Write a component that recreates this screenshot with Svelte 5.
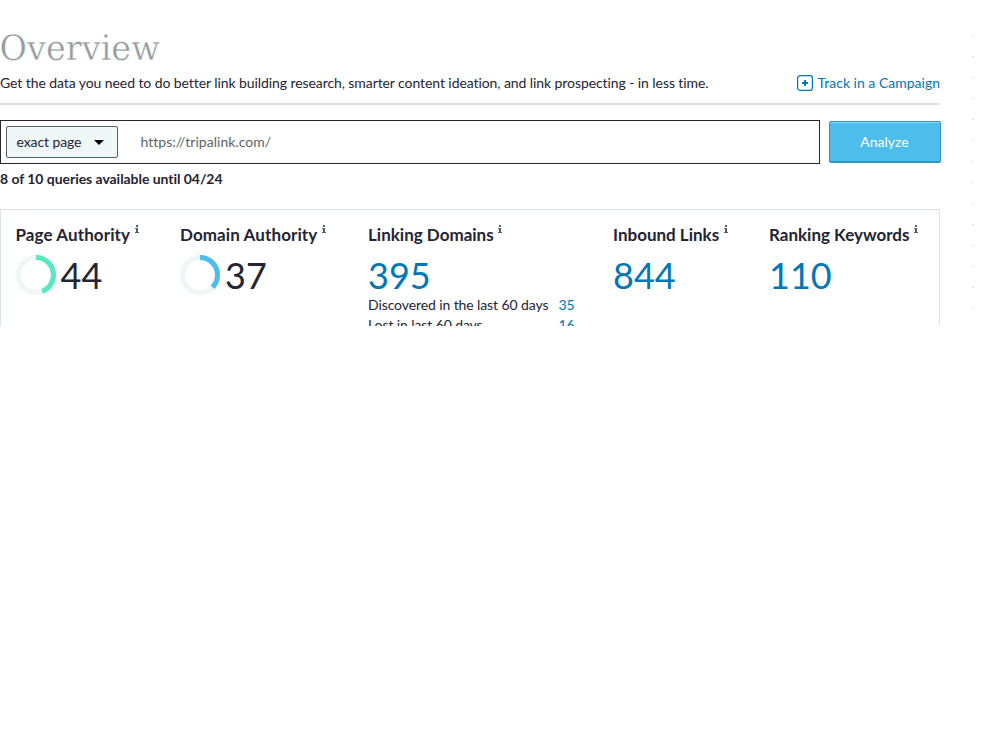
<script>
  let scope = "exact page";
  let query = "https://tripalink.com/";

  const metrics = [
    { label: "Page Authority", value: 44, color: "#5be7c4", width: 164.5 },
    { label: "Domain Authority", value: 37, color: "#4dbdeb", width: 188 },
    {
      label: "Linking Domains",
      value: 395,
      width: 245,
      details: [
        { text: "Discovered in the last 60 days", count: 35 },
        { text: "Lost in last 60 days", count: 16 },
      ],
    },
    { label: "Inbound Links", value: 844, width: 156 },
    { label: "Ranking Keywords", value: 110, width: 168 },
  ];

  const ticks = Array.from({ length: 14 });
  const circumference = 2 * Math.PI * 17.5;
</script>

<div class="page">
  <main>
    <h1>Overview</h1>
    <div class="intro">
      <p>
        Get the data you need to do better link building research, smarter
        content ideation, and link prospecting - in less time.
      </p>
      <a class="track" href="#track">
        <svg width="16" height="16" viewBox="0 0 16 16">
          <rect x=".6" y=".6" width="14.8" height="14.8" rx="2.5" fill="none" stroke="#0077b6" stroke-width="1.2" />
          <path d="M5 8h6M8 5v6" stroke="#0077b6" stroke-width="2" />
        </svg>
        <span>Track in a Campaign</span>
      </a>
    </div>

    <div class="search">
      <div class="field">
        <button class="scope">
          <span>{scope}</span>
          <svg width="10" height="5" viewBox="0 0 10 5"><path d="M0 0h10L5 5z" /></svg>
        </button>
        <span class="query">{query}</span>
      </div>
      <button class="analyze">Analyze</button>
    </div>
    <p class="quota">8 of 10 queries available until 04/24</p>

    <section class="metrics">
      {#each metrics as metric}
        <div class="metric" style="width: {metric.width}px">
          <h2 class:spaced={metric.color}>
            <span>{metric.label}</span>
            <svg class="info" width="4" height="8" viewBox="0 0 4 8">
              <path d="M1 0h2v2H1zM0 3h3v4h1v1H0V7h1V4H0z" />
            </svg>
          </h2>
          <div class="score">
            {#if metric.color}
              <svg class="ring" width="40" height="40" viewBox="0 0 40 40">
                <circle cx="20" cy="20" r="17.5" stroke="#eff7f6" />
                <circle
                  cx="20"
                  cy="20"
                  r="17.5"
                  stroke={metric.color}
                  stroke-dasharray="{(circumference * metric.value) / 100} {circumference}"
                  transform="rotate(-90 20 20)"
                />
              </svg>
              <span class="value">{metric.value}</span>
            {:else}
              <a class="value" href="#details">{metric.value}</a>
            {/if}
          </div>
          {#if metric.details}
            <div class="details">
              {#each metric.details as detail}
                <span>{detail.text}</span>
                <a href="#details">{detail.count}</a>
              {/each}
            </div>
          {/if}
        </div>
      {/each}
    </section>
  </main>

  <aside>
    {#each ticks as _}
      <i></i>
    {/each}
  </aside>
</div>

<style>
  :global(body) {
    background: #fff;
  }

  .page {
    display: flex;
    width: 1000px;
    height: 326px;
    overflow: hidden;
    font-family: Lato, sans-serif;
    font-size: 14px;
    line-height: 20px;
    font-variant-ligatures: none;
    color: #242433;
  }

  main {
    flex: none;
    width: 941px;
  }

  h1,
  h2,
  p {
    margin: 0;
  }

  h1 {
    height: 73px;
    padding-top: 24px;
    box-sizing: border-box;
    font-family: "Roboto Slab", "DejaVu Serif", serif;
    font-size: 36px;
    font-weight: 300;
    line-height: 48px;
    color: #949d9d;
    -webkit-text-stroke: 0.4px #fff;
    transform: scaleX(0.93);
    transform-origin: 8px 0;
    margin-left: -1px;
  }

  a {
    color: #0077b6;
    text-decoration: none;
  }

  .intro {
    display: flex;
    justify-content: space-between;
    width: 940px;
    height: 32px;
    box-sizing: border-box;
    border-bottom: 2px solid #dce5e5;
    white-space: nowrap;
  }

  .intro p {
    letter-spacing: -0.08px;
  }

  .track {
    display: flex;
    gap: 5px;
  }

  .track svg {
    margin-top: 2px;
  }

  .search {
    display: flex;
    gap: 9px;
    height: 44px;
    margin-top: 15px;
  }

  .field {
    display: flex;
    align-items: center;
    width: 820px;
    box-sizing: border-box;
    padding-left: 5px;
    border: 1px solid #242433;
  }

  button {
    font: inherit;
    color: inherit;
    border-radius: 2px;
  }

  .scope {
    display: flex;
    align-items: center;
    justify-content: space-between;
    width: 112px;
    height: 32px;
    padding: 0 13px 0 9.5px;
    border: 1px solid #566060;
    background: #eff7f8;
    letter-spacing: -0.1px;
  }

  .query {
    margin-left: 22.5px;
    color: #5c6666;
    letter-spacing: 0.03px;
  }

  .analyze {
    width: 112px;
    height: 42px;
    margin-top: 1px;
    padding: 0 1px 0 0;
    border: 1px solid #3097c4;
    border-bottom-width: 2px;
    background: #4dbdeb;
    box-shadow: inset 0 1px #8bd5f4;
    color: #fff;
  }

  .quota {
    margin-top: 5px;
    font-weight: 700;
    letter-spacing: -0.05px;
  }

  .metrics {
    display: flex;
    width: 940px;
    height: 200px;
    margin-top: 20px;
    padding: 15px 0 0 14.5px;
    box-sizing: border-box;
    border: 1px solid #dce5e5;
  }

  .metric {
    flex: none;
    white-space: nowrap;
  }

  h2 {
    display: flex;
    gap: 4.5px;
    font-size: 17px;
    font-weight: 700;
    line-height: 20px;
  }

  .spaced {
    letter-spacing: 0.1px;
  }

  .info {
    fill: #566060;
  }

  .score {
    display: flex;
    gap: 5px;
    height: 50px;
  }

  .ring {
    margin-top: 10px;
    fill: none;
    stroke-width: 5;
  }

  .value {
    font-size: 36px;
    line-height: 60px;
  }

  .details {
    display: grid;
    grid-template-columns: 180.5px auto;
    column-gap: 10px;
    letter-spacing: -0.1px;
  }

  aside {
    display: flex;
    flex-direction: column;
    gap: 20px;
    padding: 35px 0 0 31px;
  }

  i {
    flex: none;
    width: 2px;
    height: 1px;
    background: #dcdfdf;
  }
</style>
